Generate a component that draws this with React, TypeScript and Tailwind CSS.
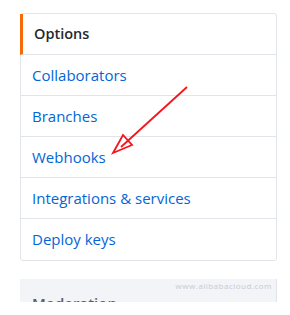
export default function App() {
  const items = ['Collaborators', 'Branches', 'Webhooks', 'Integrations & services', 'Deploy keys'];

  return (
    <div className="w-[290px] h-[315px] bg-white relative overflow-hidden" style={{ fontFamily: '"Open Sans", "Noto Sans", sans-serif' }}>
      <div className="pt-[13px] pl-[20px] w-[277px]">
        <nav className="border border-[#e1e4e8] rounded-[3px] bg-white">
          <div className="h-[41px] flex items-center pl-[11px] border-l-[3px] border-[#f66a0a] -ml-px border-b border-b-[#e1e4e8] text-[14.5px] font-semibold text-[#24292e]">
            Options
          </div>
          {items.map((item, i) => (
            <div
              key={item}
              className={`h-[41px] flex items-center pl-[11px] text-[15px] text-[#0366d6] ${i < items.length - 1 ? 'border-b border-[#e1e4e8]' : ''}`}
            >
              {item}
            </div>
          ))}
        </nav>

        <div className="mt-[18px] h-[23px] overflow-hidden bg-[#f3f4f7] border-r border-[#e1e4e8] relative">
          <span className="absolute right-[4px] top-[1px] text-[8px] text-[#c8cad0] tracking-[0.5px]">www.alibabacloud.com</span>
          <div className="pl-[12px] pt-[13px] text-[15px] font-semibold text-[#586069]">Moderation</div>
        </div>
      </div>

      {/* red arrow annotation */}
      <svg className="absolute left-0 top-0" width="290" height="315" viewBox="0 0 290 315">
        <line x1="187" y1="87" x2="121" y2="147" stroke="#f5141a" strokeWidth="1.8" />
        <polygon points="113,153 123,135 132,145" fill="none" stroke="#f5141a" strokeWidth="1.8" strokeLinejoin="miter" />
      </svg>
    </div>
  );
}
